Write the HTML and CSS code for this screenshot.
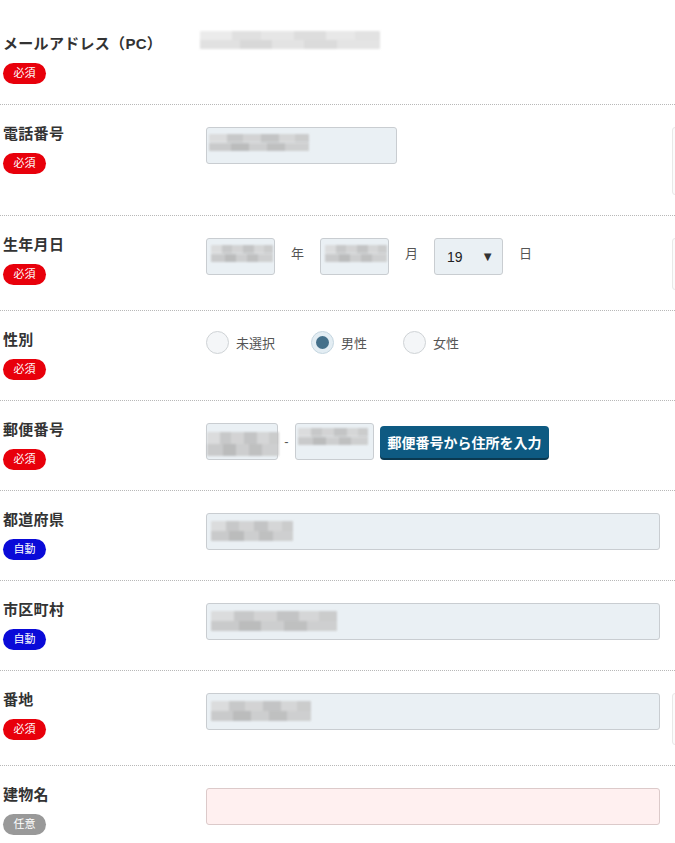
FILE: index.html
```html
<html>
	<head>
		<title>会員情報</title>
		<meta charset="utf-8"/>
		<meta name="viewport" content="width=device-width, initial-scale=1">
		<link rel="stylesheet" href="styles.css">
	</head>
	<body>
		<div class="form">
			<div class="row">
				<div class="head"><div class="label">メールアドレス（PC）</div><span class="badge req">必須</span></div>
				<div class="field plain"><span class="mask mask-mail"></span></div>
			</div>
			<div class="row">
				<div class="head"><div class="label">電話番号</div><span class="badge req">必須</span></div>
				<div class="field"><div class="box box-tel"><span class="mask mask-tel"></span></div></div>
				<div class="side side-lg"></div>
			</div>
			<div class="row">
				<div class="head"><div class="label">生年月日</div><span class="badge req">必須</span></div>
				<div class="field">
					<div class="box box-sm"><span class="mask mask-sm"></span></div>
					<span class="unit">年</span>
					<div class="box box-sm"><span class="mask mask-sm"></span></div>
					<span class="unit">月</span>
					<div class="box box-sm select">19<span class="arrow">▼</span></div>
					<span class="unit">日</span>
				</div>
				<div class="side"></div>
			</div>
			<div class="row">
				<div class="head"><div class="label">性別</div><span class="badge req">必須</span></div>
				<div class="field radios">
					<label class="radio"><span class="dot"></span>未選択</label>
					<label class="radio"><span class="dot on"></span>男性</label>
					<label class="radio"><span class="dot"></span>女性</label>
				</div>
			</div>
			<div class="row">
				<div class="head"><div class="label">郵便番号</div><span class="badge req">必須</span></div>
				<div class="field">
					<div class="box box-zip1"><span class="mask mask-zip1"></span></div>
					<span class="dash">-</span>
					<div class="box box-zip2"><span class="mask mask-zip2"></span></div>
					<button class="zip-btn">郵便番号から住所を入力</button>
				</div>
			</div>
			<div class="row">
				<div class="head"><div class="label">都道府県</div><span class="badge auto">自動</span></div>
				<div class="field"><div class="box box-full"><span class="mask mask-pref"></span></div></div>
			</div>
			<div class="row">
				<div class="head"><div class="label">市区町村</div><span class="badge auto">自動</span></div>
				<div class="field"><div class="box box-full"><span class="mask mask-city"></span></div></div>
			</div>
			<div class="row">
				<div class="head"><div class="label">番地</div><span class="badge req">必須</span></div>
				<div class="field"><div class="box box-full"><span class="mask mask-addr"></span></div></div>
				<div class="side"></div>
			</div>
			<div class="row last">
				<div class="head"><div class="label">建物名</div><span class="badge any">任意</span></div>
				<div class="field"><div class="box box-full pink"></div></div>
			</div>
		</div>
	</body>
</html>
```

FILE: styles.css
```css
body {
	margin: 0;
	padding-top: 15px;
	background-color: white;
	font-family: "Liberation Sans", "Noto Sans CJK JP", sans-serif;
	color: #333;
	overflow: hidden;
}

.form {
	width: 675px;
	overflow: hidden;
}

.row {
	display: flex;
	align-items: flex-start;
	padding: 18px 0 20px 3px;
	border-bottom: 1px dotted #b8b8b8;
}

.row.last {
	border-bottom: none;
}

.head {
	width: 203px;
	flex-shrink: 0;
}

.label {
	font-size: 15px;
	font-weight: bold;
	line-height: 22px;
	height: 22px;
	letter-spacing: 0.3px;
}

.badge {
	display: inline-block;
	margin-top: 8px;
	width: 43px;
	height: 21px;
	line-height: 21px;
	border-radius: 11px;
	font-size: 11px;
	color: white;
	text-align: center;
}

.req {
	background-color: #e8000b;
}

.auto {
	background-color: #0a0ad8;
}

.any {
	background-color: #999;
}

.field {
	width: 454px;
	flex-shrink: 0;
	margin-top: 4px;
	display: flex;
	align-items: center;
}

.field.plain {
	margin-top: -2px;
	margin-left: -6px;
}

.side {
	margin-left: 12px;
	margin-top: 4px;
	width: 100px;
	height: 50px;
	flex-shrink: 0;
	border: 1px solid #e8e8e8;
	border-radius: 3px;
	background-color: #fbfbfb;
}

.side-lg {
	height: 66px;
}

.box {
	box-sizing: border-box;
	height: 37px;
	background-color: #eaf0f4;
	border: 1px solid #c9cdd1;
	border-radius: 3px;
	padding: 6px 2px 0;
	position: relative;
}

.box-tel {
	width: 191px;
}

.box-sm {
	width: 69px;
	padding-left: 4px;
}

.box-zip1 {
	width: 72px;
	padding-left: 0;
}

.box-zip2 {
	width: 79px;
	padding-left: 2px;
	padding-top: 4px;
}

.box-full {
	width: 454px;
	padding-left: 4px;
	padding-top: 7px;
}

.pink {
	background-color: #fff0f0;
	border-color: #dccaca;
}

.mask {
	display: block;
	height: 17px;
	background:
		linear-gradient(90deg, #d9d9d9 0 18%, #c2c2c2 18% 34%, #cfcfcf 34% 52%, #bdbdbd 52% 70%, #d2d2d2 70% 86%, #c6c6c6 86%) top / 100% 50% no-repeat,
		linear-gradient(90deg, #c4c4c4 0 22%, #b3b3b3 22% 40%, #c9c9c9 40% 58%, #b8b8b8 58% 76%, #cacaca 76%) bottom / 100% 50% no-repeat;
	filter: blur(1px);
	opacity: 0.85;
}

.mask-mail {
	width: 180px;
	height: 18px;
	opacity: 0.5;
}

.mask-tel {
	width: 100px;
}

.mask-sm {
	width: 62px;
}

.mask-zip1 {
	width: 72px;
	height: 24px;
	margin-top: 2px;
}

.mask-zip2 {
	width: 70px;
}

.mask-pref {
	width: 82px;
	height: 20px;
}

.mask-city {
	width: 126px;
	height: 20px;
}

.mask-addr {
	width: 100px;
	height: 20px;
}

.unit {
	font-size: 13px;
	color: #555;
	width: 45px;
	text-align: center;
	margin-top: -8px;
	font-family: "Noto Sans CJK JP", sans-serif;
}

.select {
	padding: 0 8px 0 12px;
	display: flex;
	align-items: center;
	justify-content: space-between;
	font-size: 14px;
	color: #222;
}

.arrow {
	font-size: 13px;
	color: #333;
}

.radios {
	align-items: center;
	margin-top: 2px;
}

.radio {
	display: flex;
	align-items: center;
	font-size: 13px;
	color: #555;
	margin-right: 36px;
	font-family: "Noto Sans CJK JP", sans-serif;
}

.dot {
	box-sizing: border-box;
	width: 23px;
	height: 23px;
	border-radius: 50%;
	border: 1px solid #cfd3d6;
	background-color: #f4f6f8;
	margin-right: 7px;
	position: relative;
}

.dot.on {
	border-color: #c5d6e0;
	background-color: #e3edf3;
}

.dot.on::after {
	content: "";
	position: absolute;
	left: 4px;
	top: 4px;
	width: 13px;
	height: 13px;
	border-radius: 50%;
	background-color: #44708a;
}

.dash {
	width: 17px;
	text-align: center;
	font-size: 13px;
	color: #555;
}

.zip-btn {
	margin-left: 6px;
	height: 32px;
	width: 169px;
	border: none;
	border-radius: 4px;
	background-color: #0e5a82;
	box-shadow: 0 2px 0 #0a3850;
	color: white;
	font-weight: bold;
	font-size: 14px;
	font-family: "Noto Sans CJK JP", sans-serif;
	padding: 0;
}
```
